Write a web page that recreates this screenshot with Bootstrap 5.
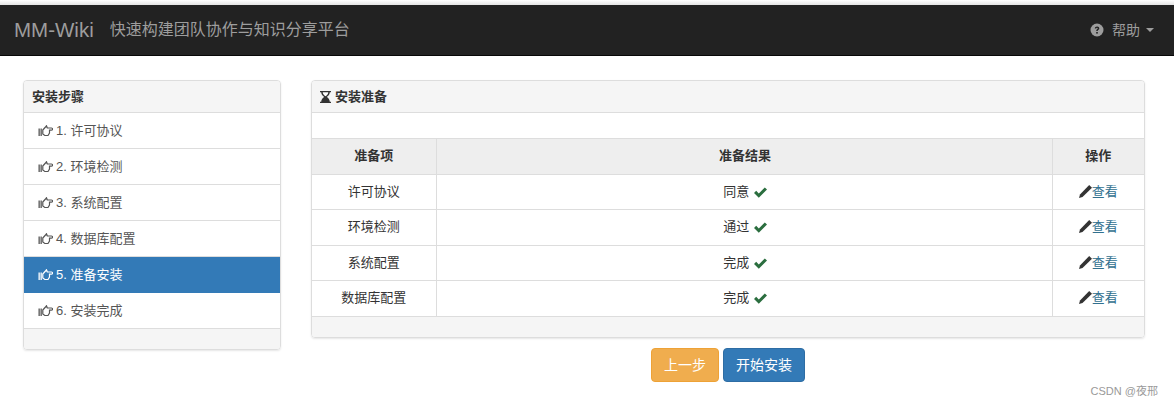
<!DOCTYPE html>
<html lang="zh">
<head>
<meta charset="utf-8">
<title>MM-Wiki</title>
<link href="https://cdn.jsdelivr.net/npm/bootstrap@5.3.0/dist/css/bootstrap.min.css" rel="stylesheet">
<style>
html,body{height:407px;overflow:hidden}
body{font-family:"Liberation Sans","Noto Sans CJK SC",sans-serif;font-size:13px;color:#333;background:#fff;position:relative;padding-top:5px}
body::before{content:"";position:absolute;left:0;right:0;top:0;height:5px;background:linear-gradient(#fff,#e4e4e4)}
.topbar{height:51px;background:#222;border-bottom:1px solid #080808;padding:0 20px 0 14px;color:#9d9d9d}
.brand-name{font-size:20.5px;margin-right:16px;line-height:1}
.brand-sub{font-size:16px}
.help-link{color:#9d9d9d;font-size:14px;margin-right:2px}
.caret-down{width:0;height:0;border-top:4px solid #9d9d9d;border-left:4px solid transparent;border-right:4px solid transparent}
.page-wrap{padding:24px 29px 0 23px;gap:30px}
.side-col{width:258px;flex:none}
.main-col{width:834px;flex:none}
.pane{border:1px solid #ddd;border-radius:4px;box-shadow:0 1px 2px rgba(0,0,0,.1);overflow:hidden}
.pane-head{height:32px;background:#f5f5f5;border-bottom:1px solid #ddd;padding:1px 8px 0;font-weight:700;font-size:13px;color:#333}
.pane-foot{height:21px;background:#f5f5f5;border-top:1px solid #ddd}
.step-item{height:36px;padding:0 14px;border-bottom:1px solid #ddd;color:#555;gap:3px}
.step-item.is-current{background:#337ab7;color:#fff;border-bottom-color:#337ab7}
.last-step{height:35px;border-bottom:0}
.pane-gap{height:25px}
.ready-table{width:100%;border-collapse:collapse;table-layout:fixed;margin:0}
.ready-table th,.ready-table td{border:1px solid #ddd;text-align:center;vertical-align:middle;padding:0;color:#333}
.ready-table tr>:first-child{border-left:0}
.ready-table tr>:last-child{border-right:0}
.ready-table tr:last-child td{border-bottom:0}
.ready-table th{height:36px;background:#eee;font-size:13px;padding-bottom:2px}
.ready-table td{height:35px}
.ready-table tbody tr:nth-child(even) td{padding-bottom:2px}
.ready-table tbody tr:nth-child(2) td{height:36px}
.ready-table tr>:nth-child(2){padding-left:2px}
.view-link{color:#31708f;text-decoration:none}
.view-link svg{vertical-align:-2px}
.tick{vertical-align:-2px;margin-left:1px}
.act-row{gap:4px;margin-top:10px}
.act-btn{height:34px;border-radius:4px;color:#fff;padding:0 12px;line-height:32px;--bs-btn-font-size:14px;--bs-btn-padding-y:0;--bs-btn-padding-x:12px}
.act-prev{width:68px;background:#f0ad4e;border:1px solid #eea236}
.act-next{width:82px;background:#337ab7;border:1px solid #2e6da4}
.wm{position:absolute;right:16px;bottom:8px;font-size:11px;color:#999}
</style>
</head>
<body>
<nav class="topbar d-flex align-items-center justify-content-between">
  <div class="d-flex align-items-center"><span class="brand-name">MM-Wiki</span><span class="brand-sub">快速构建团队协作与知识分享平台</span></div>
  <div class="d-flex align-items-center">
    <svg width="14" height="14" viewBox="0 0 14 14" class="me-2"><circle cx="7" cy="7" r="6.500" fill="#9d9d9d"/><path d="M4.800 5.400c0-1.300 1-2 2.300-2s2.200.8 2.200 1.900c0 1.600-1.600 1.500-1.600 2.700H6.200c0-1.900 1.500-1.900 1.500-2.600 0-.4-.3-.7-.7-.7s-.8.3-.8.9z" fill="#222"/><rect x="6.200" y="9" width="1.600" height="1.600" fill="#222"/></svg>
    <span class="help-link">帮助</span><span class="caret-down ms-1"></span>
  </div>
</nav>
<div class="page-wrap d-flex align-items-start">
  <div class="side-col">
    <div class="pane">
      <div class="pane-head d-flex align-items-center">安装步骤</div>
      <div class="step-item d-flex align-items-center"><svg width="15" height="12" viewBox="0 0 15 12"><use href="#hand"/></svg><span>1. 许可协议</span></div>
      <div class="step-item d-flex align-items-center"><svg width="15" height="12" viewBox="0 0 15 12"><use href="#hand"/></svg><span>2. 环境检测</span></div>
      <div class="step-item d-flex align-items-center"><svg width="15" height="12" viewBox="0 0 15 12"><use href="#hand"/></svg><span>3. 系统配置</span></div>
      <div class="step-item d-flex align-items-center"><svg width="15" height="12" viewBox="0 0 15 12"><use href="#hand"/></svg><span>4. 数据库配置</span></div>
      <div class="step-item is-current d-flex align-items-center"><svg width="15" height="12" viewBox="0 0 15 12"><use href="#hand"/></svg><span>5. 准备安装</span></div>
      <div class="step-item last-step d-flex align-items-center"><svg width="15" height="12" viewBox="0 0 15 12"><use href="#hand"/></svg><span>6. 安装完成</span></div>
      <div class="pane-foot"></div>
    </div>
  </div>
  <div class="main-col">
    <div class="pane">
      <div class="pane-head d-flex align-items-center gap-1">
        <svg width="11" height="12" viewBox="0 0 11 12"><path d="M0 0h11v1.300H9.800C9.700 3.500 8.500 5 6.700 6c1.800 1 3 2.500 3.100 4.700H11V12H0v-1.300h1.200C1.300 8.500 2.500 7 4.300 6 2.500 5 1.300 3.500 1.200 1.300H0z" fill="#333"/><path d="M2.700 1.300h5.600C8.200 3 7 4.500 5.500 5.200 4 4.500 2.800 3 2.700 1.300z" fill="#fff"/></svg>
        安装准备</div>
      <div class="pane-gap"></div>
      <table class="ready-table">
        <colgroup><col style="width:124px"><col><col style="width:92px"></colgroup>
        <thead><tr><th>准备项</th><th>准备结果</th><th>操作</th></tr></thead>
        <tbody>
          <tr><td>许可协议</td><td>同意 <svg class="tick" width="13" height="11" viewBox="0 0 13 11"><use href="#tick"/></svg></td><td><a class="view-link" href="#"><svg width="13" height="13" viewBox="0 0 13 13"><use href="#pen"/></svg>查看</a></td></tr>
          <tr><td>环境检测</td><td>通过 <svg class="tick" width="13" height="11" viewBox="0 0 13 11"><use href="#tick"/></svg></td><td><a class="view-link" href="#"><svg width="13" height="13" viewBox="0 0 13 13"><use href="#pen"/></svg>查看</a></td></tr>
          <tr><td>系统配置</td><td>完成 <svg class="tick" width="13" height="11" viewBox="0 0 13 11"><use href="#tick"/></svg></td><td><a class="view-link" href="#"><svg width="13" height="13" viewBox="0 0 13 13"><use href="#pen"/></svg>查看</a></td></tr>
          <tr><td>数据库配置</td><td>完成 <svg class="tick" width="13" height="11" viewBox="0 0 13 11"><use href="#tick"/></svg></td><td><a class="view-link" href="#"><svg width="13" height="13" viewBox="0 0 13 13"><use href="#pen"/></svg>查看</a></td></tr>
        </tbody>
      </table>
      <div class="pane-foot"></div>
    </div>
    <div class="act-row d-flex justify-content-center">
      <button class="btn act-btn act-prev" type="button">上一步</button>
      <button class="btn act-btn act-next" type="button">开始安装</button>
    </div>
  </div>
</div>
<div class="wm">CSDN @夜邢</div>
<svg width="0" height="0" class="d-none">
  <defs>
    <g id="hand" fill="none" stroke="currentColor"><rect x=".5" y="3.500" width="1.300" height="7.500" fill="currentColor" stroke="none"/><rect x="2.500" y="3.500" width="1.300" height="7.500" fill="currentColor" stroke="none"/><path d="M4.800 5 7.500 2 8.500 .8 9.300 3H13.500a1.100 1.100 0 0 1 0 2.200H11.500V8L10 10.500H6.800L4.800 9z" stroke-width="1.200"/></g>
    <path id="tick" d="M0 6 2.200 3.800 4.800 6.400 10.800 .4 13 2.600 4.800 10.800z" fill="#2b6e3f"/>
    <path id="pen" d="M10.200 0 13 2.800 3.500 12 0 13 1 9.500z" fill="#333" stroke="none"/>
  </defs>
</svg>
</body>
</html>
